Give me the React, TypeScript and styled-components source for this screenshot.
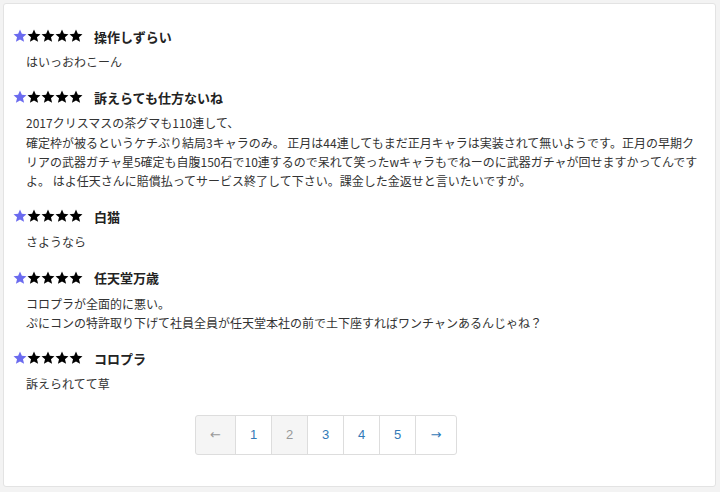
import React from "react";
import styled, { createGlobalStyle } from "styled-components";

const Global = createGlobalStyle`
  html, body { margin: 0; padding: 0; background: #f3f3f3; }
  body { font-family: "Noto Sans CJK JP", "Liberation Sans", sans-serif; }
`;

const Card = styled.div`
  margin: 3px;
  width: 713px;
  height: 484px;
  background: #fff;
  border: 1px solid #e3e3e3;
  border-radius: 3px;
  padding-top: 20px;
  box-sizing: border-box;
`;

const Review = styled.div`
  margin-bottom: 14px;
`;

const Header = styled.div`
  display: flex;
  align-items: center;
  height: 24px;
  padding-left: 9px;
`;

const Stars = styled.div`
  display: flex;
  margin-right: 11px;
`;

const Title = styled.span`
  font-size: 13px;
  font-weight: 700;
  color: #222;
`;

const Body = styled.div`
  margin-top: 4px;
  padding-left: 22px;
  padding-right: 6px;
  font-size: 12px;
  line-height: 19.3px;
  color: #333;
  white-space: nowrap;
`;

const Pager = styled.div`
  display: flex;
  margin: 21px 0 0 191px;
`;

const PageCell = styled.div<{ $w: number; $muted?: boolean; $first?: boolean; $last?: boolean; $arrow?: boolean }>`
  width: ${(p) => p.$w}px;
  height: 40px;
  box-sizing: border-box;
  display: flex;
  align-items: center;
  justify-content: center;
  font-family: ${(p) => (p.$arrow ? '"DejaVu Sans", sans-serif' : '"Liberation Sans", sans-serif')};
  font-size: 13px;
  border: 1px solid #ddd;
  margin-left: ${(p) => (p.$first ? 0 : -1)}px;
  background: ${(p) => (p.$muted ? "#f5f5f5" : "#fff")};
  color: ${(p) => (p.$muted ? "#999" : "#337ab7")};
  border-radius: ${(p) => (p.$first ? "3px 0 0 3px" : p.$last ? "0 3px 3px 0" : "0")};
`;

const Star = ({ color }: { color: string }) => (
  <svg width="14" height="14" viewBox="0 0 24 24">
    <path
      d="M12 1l3.2 7.3 7.9.6-6 5.2 1.9 7.8L12 17.8l-7 4.1 1.9-7.8-6-5.2 7.9-.6z"
      fill={color}
    />
  </svg>
);

const reviews: { title: string; lines: string[] }[] = [
  { title: "操作しずらい", lines: ["はいっおわこーん"] },
  {
    title: "訴えらても仕方ないね",
    lines: [
      "2017クリスマスの茶グマも110連して、",
      "確定枠が被るというケチぶり結局3キャラのみ。 正月は44連してもまだ正月キャラは実装されて無いようです。正月の早期ク",
      "リアの武器ガチャ星5確定も自腹150石で10連するので呆れて笑ったwキャラもでねーのに武器ガチャが回せますかってんです",
      "よ。 はよ任天さんに賠償払ってサービス終了して下さい。課金した金返せと言いたいですが。",
    ],
  },
  { title: "白猫", lines: ["さようなら"] },
  {
    title: "任天堂万歳",
    lines: [
      "コロプラが全面的に悪い。",
      "ぷにコンの特許取り下げて社員全員が任天堂本社の前で土下座すればワンチャンあるんじゃね？",
    ],
  },
  { title: "コロプラ", lines: ["訴えられてて草"] },
];

const pages = [
  { label: "←", w: 41, muted: true, arrow: true },
  { label: "1", w: 37 },
  { label: "2", w: 37, muted: true },
  { label: "3", w: 37 },
  { label: "4", w: 37 },
  { label: "5", w: 37 },
  { label: "→", w: 42, arrow: true },
];

export default function App() {
  return (
    <>
      <Global />
      <Card>
        {reviews.map((r, i) => (
          <Review key={i}>
            <Header>
              <Stars>
                <Star color="#6b6bef" />
                <Star color="#000" />
                <Star color="#000" />
                <Star color="#000" />
                <Star color="#000" />
              </Stars>
              <Title>{r.title}</Title>
            </Header>
            <Body>
              {r.lines.map((l, j) => (
                <div key={j}>{l}</div>
              ))}
            </Body>
          </Review>
        ))}
        <Pager>
          {pages.map((p, i) => (
            <PageCell
              key={i}
              $w={p.w}
              $muted={p.muted}
              $arrow={p.arrow}
              $first={i === 0}
              $last={i === pages.length - 1}
            >
              {p.label}
            </PageCell>
          ))}
        </Pager>
      </Card>
    </>
  );
}
